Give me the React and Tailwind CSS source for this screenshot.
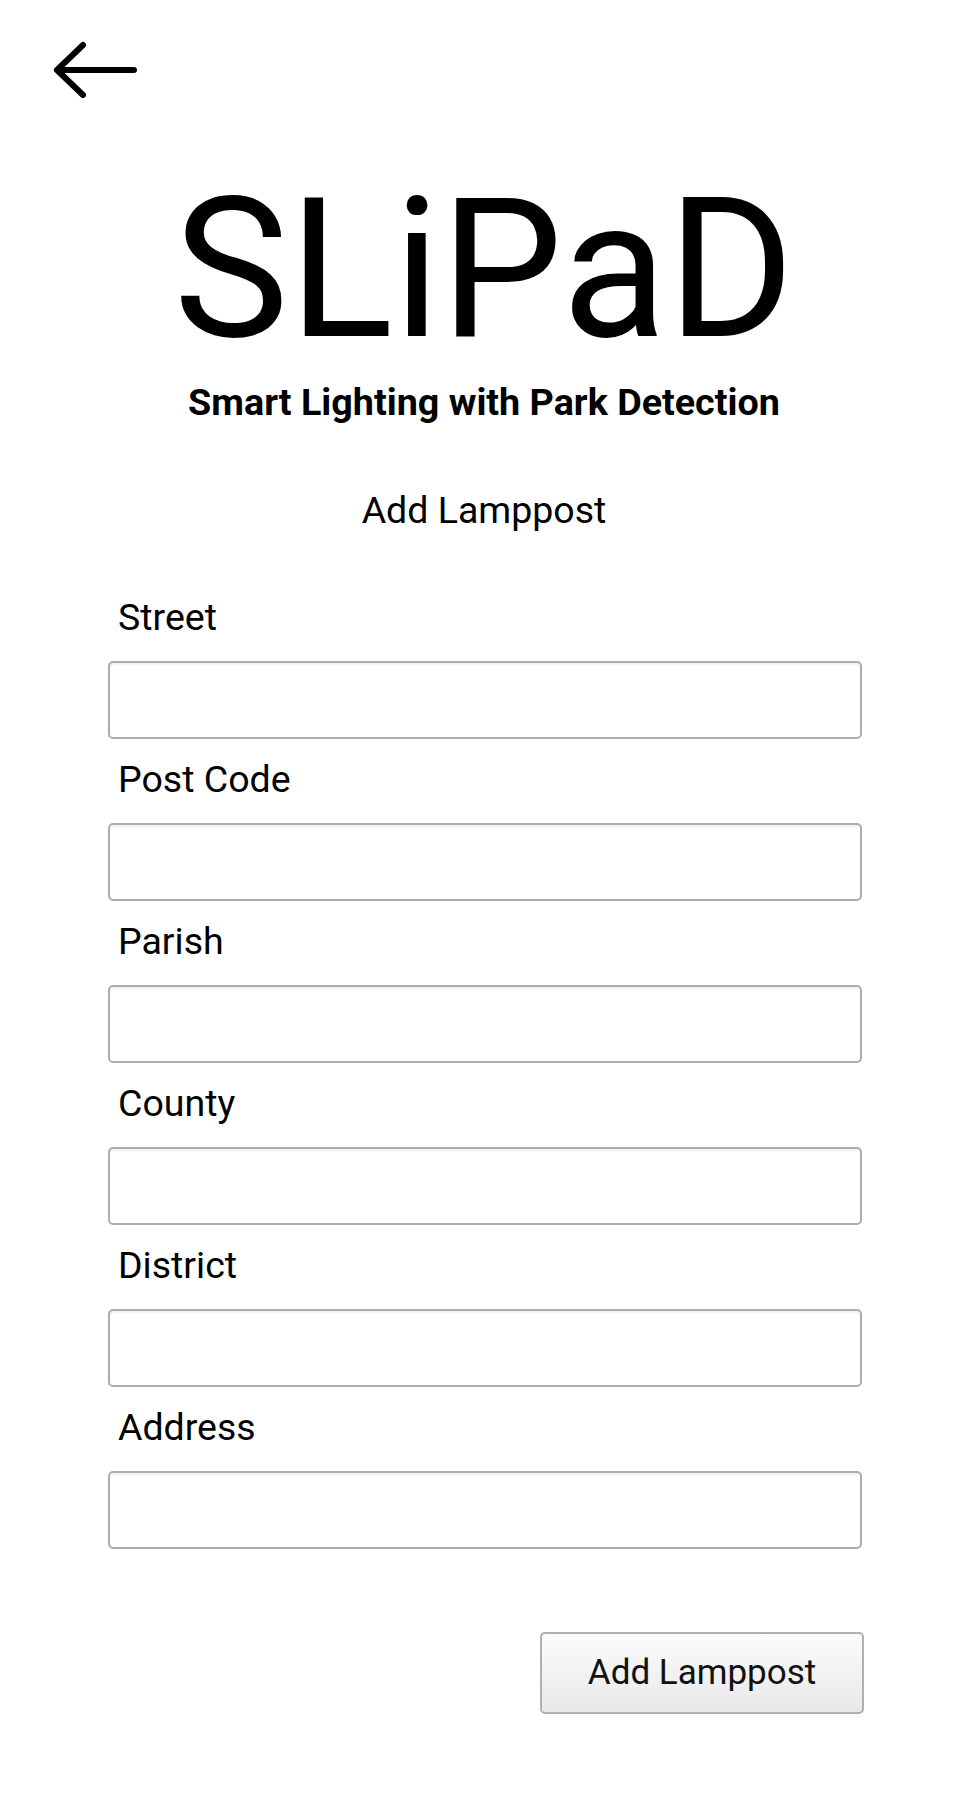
import React from "react";

const fields = ["Street", "Post Code", "Parish", "County", "District", "Address"];

export default function App() {
  return (
    <div className="w-full min-h-[1815px] bg-white text-black" style={{ fontFamily: "Roboto, 'Noto Sans', sans-serif" }}>
      <div className="pt-[39px] pl-[50px]">
        <svg width="90" height="64" viewBox="0 0 90 64" fill="none">
          <path d="M7 31 L84 31 M33 6 L7 31 L33 56" stroke="#000" strokeWidth="6" strokeLinecap="round" strokeLinejoin="round" />
        </svg>
      </div>
      <h1 className="mt-[70px] text-center text-[194px] leading-[194px] font-normal">SLiPaD</h1>
      <p className="mt-[13px] text-center text-[37.7px] leading-[44px] font-bold">Smart Lighting with Park Detection</p>
      <p className="mt-[65px] text-center text-[37.5px] leading-[42px]">Add Lamppost</p>
      <div className="mt-[65px] ml-[108px] mr-[106px] flex flex-col gap-[19px]">
        {fields.map((f) => (
          <div key={f} className="flex flex-col">
            <label className="pl-[10px] text-[37.5px] leading-[42px]">{f}</label>
            <input
              type="text"
              className="mt-[23px] h-[78px] w-full rounded-[5px] border-2 border-[#adadad] bg-white shadow-[inset_0_2px_2px_rgba(0,0,0,0.06)] outline-none"
            />
          </div>
        ))}
      </div>
      <div className="mt-[83px] flex justify-end pr-[104px]">
        <button className="h-[82px] w-[324px] rounded-[5px] border-2 border-[#b0b0b0] bg-gradient-to-b from-[#fcfcfc] to-[#e8e8e8] text-[35px] text-[#111]">
          Add Lamppost
        </button>
      </div>
    </div>
  );
}
